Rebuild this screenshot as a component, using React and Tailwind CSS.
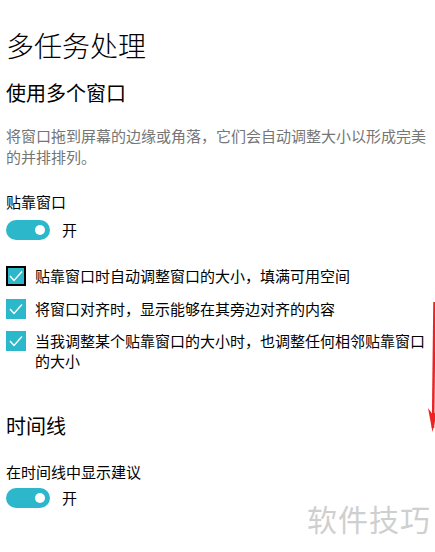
import React from "react";

const font = { fontFamily: '"Noto Sans CJK SC", "Noto Sans", sans-serif' };

const Toggle = ({ className = "" }) => (
  <div className={`flex items-center gap-[12px] ${className}`}>
    <div className="flex h-[20px] w-[44px] items-center justify-end rounded-full bg-[#2db7cb] pr-[5px]">
      <div className="h-[10px] w-[10px] rounded-full bg-white" />
    </div>
    <span className="text-[15px] leading-[20px] text-black">开</span>
  </div>
);

const Check = ({ focused, children, className = "" }) => (
  <div className={`flex items-start gap-[9px] ${className}`}>
    <div
      className={`flex h-[20px] w-[20px] shrink-0 items-center justify-center bg-[#2db7cb] ${
        focused ? "border-2 border-black" : ""
      }`}
    >
      <svg width="20" height="20" viewBox="0 0 20 20" className={focused ? "-m-[2px]" : ""}>
        <polyline points="4,10 8,14.5 16,5.5" fill="none" stroke="white" strokeWidth="1.4" />
      </svg>
    </div>
    <p className="max-w-[395px] text-[15px] leading-[20px] text-black">{children}</p>
  </div>
);

export default function App() {
  return (
    <div className="relative h-[552px] w-[435px] overflow-hidden bg-white pl-[6px]" style={font}>
      <h1 className="pt-[27px] text-[28px] font-light leading-[36px] text-black">多任务处理</h1>
      <h2 className="mt-[16px] text-[20px] leading-[28px] text-black">使用多个窗口</h2>
      <p className="mt-[18px] text-[15px] leading-[21px] text-[#757575]">
        将窗口拖到屏幕的边缘或角落，它们会自动调整大小以形成完美的并排排列。
      </p>
      <p className="mt-[24px] text-[15px] leading-[21px] text-black">贴靠窗口</p>
      <Toggle className="mt-[8px]" />

      <Check focused className="mt-[26px]">
        贴靠窗口时自动调整窗口的大小，填满可用空间
      </Check>
      <Check className="mt-[13px]">将窗口对齐时，显示能够在其旁边对齐的内容</Check>
      <Check className="mt-[12px]">
        当我调整某个贴靠窗口的大小时，也调整任何相邻贴靠窗口的大小
      </Check>

      <h2 className="mt-[41px] text-[20px] leading-[28px] text-black">时间线</h2>
      <p className="mt-[21px] text-[15px] leading-[21px] text-black">在时间线中显示建议</p>
      <Toggle className="mt-[6px]" />

      {/* watermark */}
      <div className="absolute left-[307px] top-[500px] text-[30px] leading-[36px] tracking-[1px] text-[#cfcfcf]">
        软件技巧
      </div>

      {/* red annotation arrow */}
      <svg className="absolute left-[415px] top-[290px]" width="20" height="150" viewBox="0 0 20 150">
        <line x1="19.5" y1="12" x2="18" y2="138" stroke="#ee2222" strokeWidth="2.5" />
        <polygon points="13,118 17.5,142 23,118 18,125" fill="#ee2222" />
      </svg>
    </div>
  );
}
